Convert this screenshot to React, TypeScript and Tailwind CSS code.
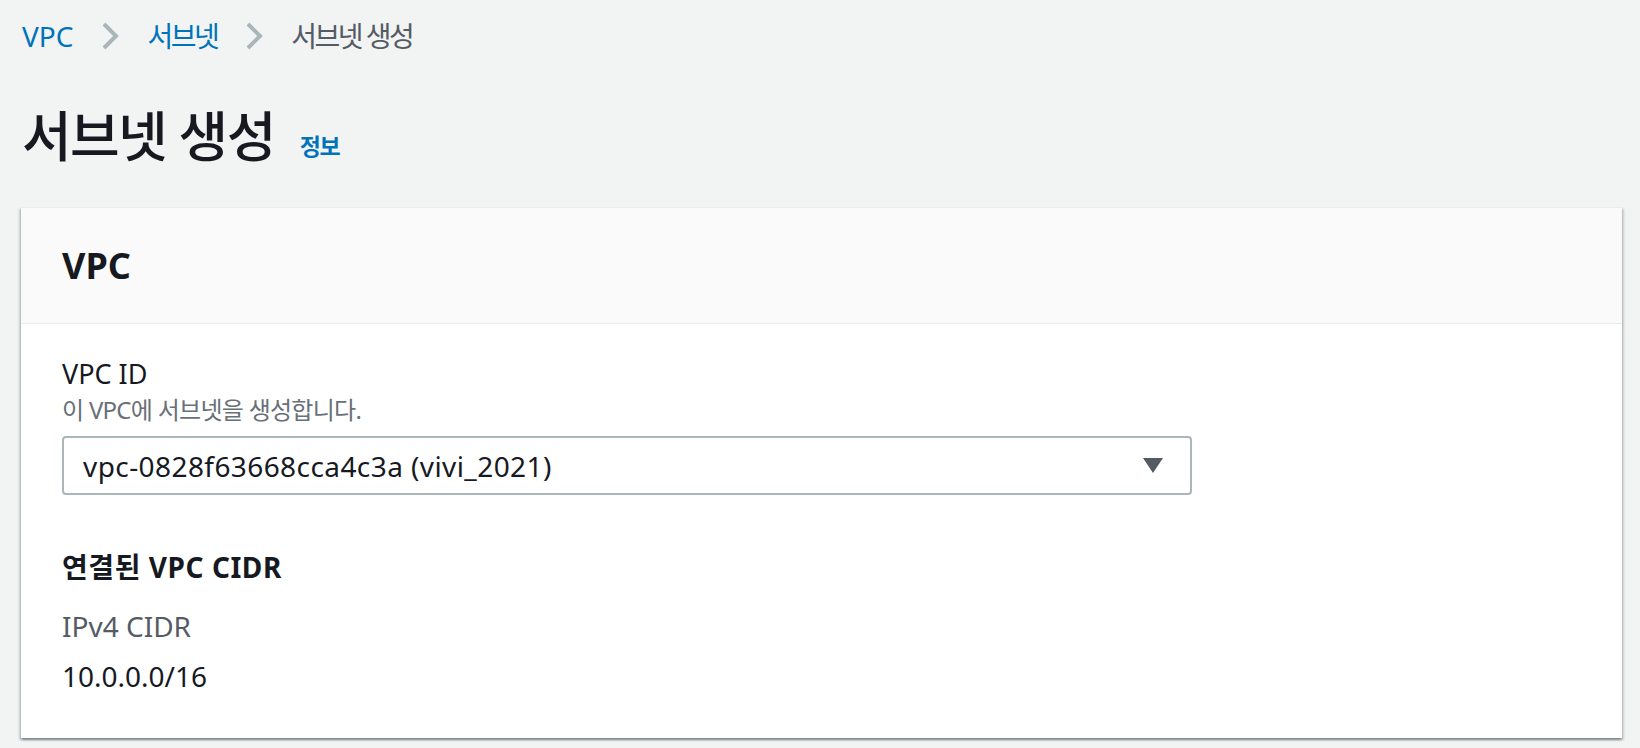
import React from "react";

function Chevron() {
  return (
    <svg width="18" height="30" viewBox="0 0 18 30" className="shrink-0">
      <polyline points="3,3 15,15 3,27" fill="none" stroke="#aab7b8" strokeWidth="4" />
    </svg>
  );
}

function Caret() {
  return (
    <svg width="20" height="15" viewBox="0 0 20 15">
      <polygon points="0,0 20,0 10,15" fill="#545b64" />
    </svg>
  );
}

export default function App() {
  return (
    <div className="min-h-screen w-full bg-[#f2f3f3] font-['Noto_Sans','Noto_Sans_CJK_KR',sans-serif] text-[#16191f]">
      {/* Breadcrumbs */}
      <nav className="h-[72px] pl-[22px] flex items-center gap-[28px] text-[28px] leading-[40px]">
        <a className="text-[#0073bb]">VPC</a>
        <Chevron />
        <a className="text-[#0073bb] tracking-[-0.09em]">서브넷</a>
        <Chevron />
        <span className="text-[#545b64] tracking-[-0.09em]">서브넷 생성</span>
      </nav>

      {/* Title */}
      <div className="h-[128px] pl-[22px] flex items-center">
        <h1 className="text-[54px] leading-[64px] font-medium tracking-[-0.03em]">서브넷 생성</h1>
        <a className="ml-[25px] mt-[20px] text-[23px] font-bold text-[#0073bb] tracking-[-0.06em]">정보</a>
      </div>

      {/* Card */}
      <div className="mt-[7px] ml-[21px] w-[1601px] bg-white border-t border-[#eaeded] shadow-[0_2px_2px_0_rgba(0,28,36,0.3),2px_2px_2px_0_rgba(0,28,36,0.15),-2px_2px_2px_0_rgba(0,28,36,0.15)]">
        <div className="h-[116px] px-[41px] flex items-center bg-[#fafafa] border-b border-[#eaeded]">
          <h2 className="text-[36px] font-bold leading-[48px]">VPC</h2>
        </div>

        <div className="px-[41px] pt-[30px] pb-[42px]">
          <div className="text-[27px] leading-[40px]">VPC ID</div>
          <div className="text-[24px] leading-[32px] text-[#687078] tracking-[-0.03em]">
            이 VPC에 서브넷을 생성합니다.
          </div>

          <div className="mt-[10px] w-[1130px] h-[59px] pl-[19px] pr-[27px] flex items-center justify-between border-2 border-[#aab7b8] rounded-[4px] bg-white">
            <span className="text-[28px] leading-[40px] tracking-[0.015em]">vpc-0828f63668cca4c3a (vivi_2021)</span>
            <Caret />
          </div>

          <h3 className="mt-[52px] text-[28px] leading-[40px] font-bold tracking-[0.02em]">
            연결된 VPC CIDR
          </h3>
          <div className="mt-[19px] text-[28px] leading-[40px] text-[#545b64]">IPv4 CIDR</div>
          <div className="mt-[10px] text-[28px] leading-[40px]">10.0.0.0/16</div>
        </div>
      </div>
    </div>
  );
}
